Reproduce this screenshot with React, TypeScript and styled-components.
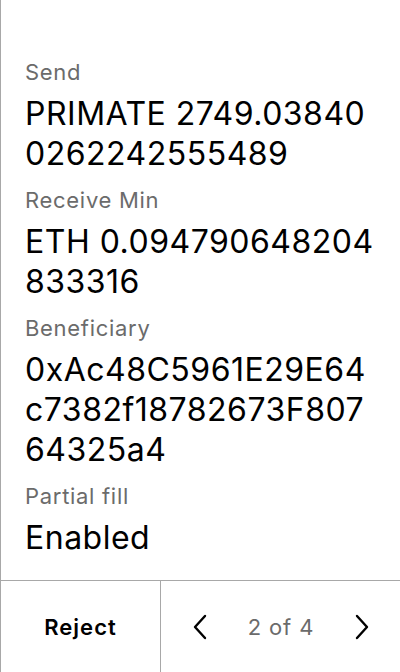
import React from "react";
import styled, { createGlobalStyle } from "styled-components";

const Global = createGlobalStyle`
  html, body { margin: 0; padding: 0; background: #fff; }
  body {
    font-family: Inter, "Noto Sans", sans-serif;
    -webkit-font-smoothing: antialiased;
  }
`;

const Screen = styled.div`
  width: 400px;
  height: 672px;
  box-sizing: border-box;
  border-left: 1px solid #a8a8a8;
  display: flex;
  flex-direction: column;
  background: #fff;
`;

const Content = styled.div`
  flex: 1;
  padding: 58px 24px 0 24px;
  display: flex;
  flex-direction: column;
`;

const Field = styled.div`
  display: flex;
  flex-direction: column;
  gap: 8px;
  margin-bottom: 12px;
`;

const Label = styled.div`
  font-size: 22px;
  line-height: 28px;
  letter-spacing: 0.7px;
  color: #6b6b6b;
`;

const Value = styled.div`
  font-size: 32px;
  line-height: 40px;
  letter-spacing: 0.5px;
  color: #000;
  overflow-wrap: anywhere;
  word-break: break-all;
`;

const Footer = styled.div`
  height: 92px;
  border-top: 1px solid #a8a8a8;
  display: grid;
  grid-template-columns: 160px 1fr;
  box-sizing: border-box;
`;

const RejectButton = styled.button`
  all: unset;
  display: flex;
  align-items: center;
  justify-content: center;
  font-family: Inter, sans-serif;
  font-size: 22px;
  letter-spacing: 1px;
  font-weight: 600;
  color: #000;
  border-right: 1px solid #a8a8a8;
`;

const Pager = styled.div`
  display: flex;
  align-items: center;
  justify-content: space-between;
  padding: 0 30px 0 31px;
`;

const PageText = styled.span`
  font-size: 22px;
  letter-spacing: 0.9px;
  color: #6b6b6b;
`;

const Arrow = styled.button`
  all: unset;
  display: flex;
  width: 16px;
  height: 26px;
  align-items: center;
  justify-content: center;
`;

const Chevron = ({ dir }: { dir: "left" | "right" }) => (
  <svg width="16" height="26" viewBox="0 0 16 26" fill="none">
    <path
      d={dir === "left" ? "M13 2 L3 13 L13 24" : "M3 2 L13 13 L3 24"}
      stroke="#000"
      strokeWidth="2.4"
      strokeLinecap="round"
      strokeLinejoin="round"
    />
  </svg>
);

const fields = [
  { label: "Send", value: "PRIMATE 2749.038400262242555489" },
  { label: "Receive Min", value: "ETH 0.094790648204833316" },
  { label: "Beneficiary", value: "0xAc48C5961E29E64c7382f18782673F80764325a4" },
  { label: "Partial fill", value: "Enabled" },
];

export default function App() {
  return (
    <>
      <Global />
      <Screen>
        <Content>
          {fields.map((f) => (
            <Field key={f.label}>
              <Label>{f.label}</Label>
              <Value>{f.value}</Value>
            </Field>
          ))}
        </Content>
        <Footer>
          <RejectButton>Reject</RejectButton>
          <Pager>
            <Arrow><Chevron dir="left" /></Arrow>
            <PageText>2 of 4</PageText>
            <Arrow><Chevron dir="right" /></Arrow>
          </Pager>
        </Footer>
      </Screen>
    </>
  );
}
